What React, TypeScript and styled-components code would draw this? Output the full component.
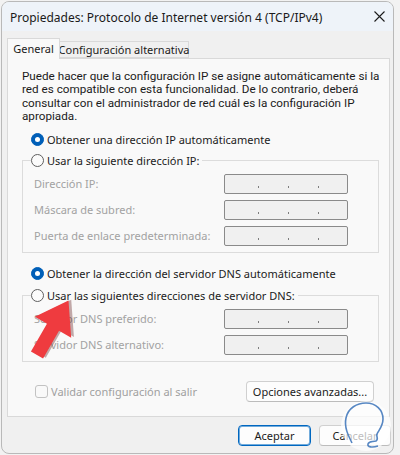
import React from "react";
import styled, { createGlobalStyle } from "styled-components";

const Global = createGlobalStyle`
  html, body { margin: 0; padding: 0; background: #f2f2f2; }
  body {
    font-family: "Noto Sans", "Segoe UI", sans-serif;
    font-size: 11px;
    color: #1b1b1b;
    overflow: hidden;
  }
  * { box-sizing: border-box; }
`;

const Page = styled.div`
  position: relative;
  width: 400px;
  height: 455px;
  padding: 1px 0 0 1px;
`;

const Window = styled.div`
  width: 393px;
  height: 453px;
  background: #f0f0f0;
  border: 1px solid #b9b9b9;
  border-radius: 8px;
  overflow: hidden;
  display: flex;
  flex-direction: column;
`;

const TitleBar = styled.div`
  height: 29px;
  flex: none;
  background: #eef3f9;
  display: flex;
  align-items: center;
  justify-content: space-between;
  padding-left: 8px;
`;

const Title = styled.span`
  font-size: 12px;
  color: #1a1a1a;
  white-space: nowrap;
  padding-top: 1px;
`;

const CloseBtn = styled.div`
  width: 22px;
  height: 29px;
  display: flex;
  align-items: center;
  justify-content: center;
  margin-right: 3px;
`;

const Body = styled.div`
  flex: 1;
  display: flex;
  flex-direction: column;
  padding: 7px 2px 0 5px;
`;

const TabRow = styled.div`
  display: flex;
  align-items: flex-end;
  height: 20px;
  position: relative;
  z-index: 2;
`;

const Tab = styled.div<{ $active?: boolean }>`
  display: flex;
  align-items: center;
  justify-content: center;
  white-space: nowrap;
  border: 1px solid #d9d9d9;
  border-bottom: ${(p) => (p.$active ? "none" : "1px solid #d9d9d9")};
  background: ${(p) => (p.$active ? "#f9f9f9" : "#f0f0f0")};
  height: ${(p) => (p.$active ? "21px" : "17px")};
  margin-bottom: ${(p) => (p.$active ? "-1px" : "0")};
  margin-left: ${(p) => (p.$active ? "0" : "-1px")};
  padding: ${(p) => (p.$active ? "0 0 1px" : "0")};
  width: ${(p) => (p.$active ? "53px" : "130px")};
  position: relative;
  z-index: ${(p) => (p.$active ? 2 : 1)};
`;

const Panel = styled.div`
  height: 359px;
  width: 383px;
  background: #f9f9f9;
  border: 1px solid #d9d9d9;
  display: flex;
  flex-direction: column;
  padding: 0 0 0 14px;
`;

const Para = styled.p`
  margin: 11px 0 0;
  font-family: Roboto, "Noto Sans", sans-serif;
  font-size: 11.7px;
  line-height: 13.4px;
  white-space: nowrap;
`;

const RadioRow = styled.label<{ $mt: number }>`
  display: flex;
  align-items: center;
  gap: 3px;
  height: 16px;
  margin-top: ${(p) => p.$mt}px;
  padding-left: 9px;
  white-space: nowrap;
`;

const RadioDot = styled.span<{ $on?: boolean }>`
  width: 13px;
  height: 13px;
  flex: none;
  border-radius: 50%;
  background: ${(p) => (p.$on ? "#005fb8" : "#fbfbfb")};
  border: 1px solid ${(p) => (p.$on ? "#005fb8" : "#5f5f5f")};
  display: flex;
  align-items: center;
  justify-content: center;
  &::after {
    content: "";
    display: ${(p) => (p.$on ? "block" : "none")};
    width: 5px;
    height: 5px;
    border-radius: 50%;
    background: #ffffff;
  }
`;

const Group = styled.fieldset<{ $mt: number }>`
  margin: ${(p) => p.$mt}px 0 0;
  width: 357px;
  padding: 0 0 6px 11px;
  border: 1px solid #dcdcdc;
  min-width: 0;
  display: flex;
  flex-direction: column;
  gap: 6px;
`;

const Legend = styled.legend`
  padding: 0 3px 0 0;
  margin-left: -3px;
  height: 16px;
  display: flex;
  align-items: center;
  gap: 3px;
  white-space: nowrap;
`;

const FieldRow = styled.div<{ $first?: boolean }>`
  display: grid;
  grid-template-columns: 190px 124px;
  align-items: center;
  margin-top: ${(p) => (p.$first ? "5px" : "0")};
  color: #a2a2a2;
  white-space: nowrap;
`;

const IpBox = styled.div`
  height: 20px;
  border: 1px solid #8a8a8a;
  border-radius: 2px;
  background: #f0f0f0;
  display: flex;
  align-items: flex-end;
  justify-content: center;
  gap: 29px;
  padding: 0 0 5px 4px;
`;

const IpDot = styled.span`
  width: 1px;
  height: 2px;
  background: #7d7d7d;
`;

const BottomRow = styled.div`
  display: flex;
  align-items: center;
  justify-content: space-between;
  margin-top: 19px;
  padding: 0 15px 0 13px;
  height: 21px;
`;

const CheckRow = styled.label`
  display: flex;
  align-items: center;
  gap: 3px;
  color: #a0a0a0;
  white-space: nowrap;
`;

const CheckBox = styled.span`
  width: 13px;
  height: 13px;
  border: 1px solid #c2c2c2;
  border-radius: 3px;
  background: #f9f9f9;
`;

const Button = styled.button<{ $primary?: boolean; $w: number }>`
  font-family: inherit;
  font-size: 11px;
  color: #1b1b1b;
  height: 21px;
  width: ${(p) => p.$w}px;
  padding: 0;
  background: #fdfdfd;
  border-radius: 4px;
  border: 1px solid ${(p) => (p.$primary ? "#0067c0" : "#d0d0d0")};
  border-bottom-color: ${(p) => (p.$primary ? "#0067c0" : "#bcbcbc")};
  box-shadow: ${(p) => (p.$primary ? "inset 0 0 0 1px rgba(0,103,192,0.55)" : "none")};
  white-space: nowrap;
`;

const Footer = styled.div`
  display: flex;
  justify-content: flex-end;
  gap: 8px;
  margin-top: 8px;
  padding-right: 0;
`;

const Overlay = styled.svg`
  position: absolute;
  left: 0;
  top: 0;
  pointer-events: none;
`;

const Ip = () => (
  <IpBox>
    <IpDot />
    <IpDot />
    <IpDot />
  </IpBox>
);

export default function App() {
  return (
    <>
      <Global />
      <Page>
        <Window>
          <TitleBar>
            <Title>Propiedades: Protocolo de Internet versión 4 (TCP/IPv4)</Title>
            <CloseBtn>
              <svg width="11" height="11" viewBox="0 0 11 11">
                <path d="M0.5 0.5 L10.5 10.5 M10.5 0.5 L0.5 10.5" stroke="#1c1c1c" strokeWidth="1.1" />
              </svg>
            </CloseBtn>
          </TitleBar>
          <Body>
            <TabRow>
              <Tab $active>General</Tab>
              <Tab>Configuración alternativa</Tab>
            </TabRow>
            <Panel>
              <Para>
                Puede hacer que la configuración IP se asigne automáticamente si la
                <br />
                red es compatible con esta funcionalidad. De lo contrario, deberá
                <br />
                consultar con el administrador de red cuál es la configuración IP
                <br />
                apropiada.
              </Para>
              <RadioRow $mt={8}>
                <RadioDot $on />
                Obtener una dirección IP automáticamente
              </RadioRow>
              <Group $mt={5}>
                <Legend>
                  <RadioDot />
                  Usar la siguiente dirección IP:
                </Legend>
                <FieldRow $first>
                  <span>Dirección IP:</span>
                  <Ip />
                </FieldRow>
                <FieldRow>
                  <span>Máscara de subred:</span>
                  <Ip />
                </FieldRow>
                <FieldRow>
                  <span>Puerta de enlace predeterminada:</span>
                  <Ip />
                </FieldRow>
              </Group>
              <RadioRow $mt={13}>
                <RadioDot $on />
                Obtener la dirección del servidor DNS automáticamente
              </RadioRow>
              <Group $mt={6}>
                <Legend>
                  <RadioDot />
                  Usar las siguientes direcciones de servidor DNS:
                </Legend>
                <FieldRow $first>
                  <span>Servidor DNS preferido:</span>
                  <Ip />
                </FieldRow>
                <FieldRow>
                  <span>Servidor DNS alternativo:</span>
                  <Ip />
                </FieldRow>
              </Group>
              <BottomRow>
                <CheckRow>
                  <CheckBox />
                  Validar configuración al salir
                </CheckRow>
                <Button $w={128}>Opciones avanzadas...</Button>
              </BottomRow>
            </Panel>
            <Footer>
              <Button $primary $w={73}>Aceptar</Button>
              <Button $w={72}>Cancelar</Button>
            </Footer>
          </Body>
        </Window>
        <Overlay width="400" height="455" viewBox="0 0 400 455">
          <g transform="translate(37 355) rotate(-60)">
            <polygon
              points="0,-7 32,-7 32,-21 63,0 32,21 32,7 0,7"
              fill="#5a1010"
              opacity="0.35"
              transform="translate(2 2)"
            />
            <polygon points="0,-7 32,-7 32,-21 63,0 32,21 32,7 0,7" fill="#ef3b3f" />
          </g>
          <circle cx="366" cy="426" r="25" fill="#ffffff" opacity="0.7" />
          <path
            d="M352 443 C348 435 344 427 346 418 C348 408 357 403 366 403 C376 403 383 410 383 419 C383 426 379 430 377 434 C376 437 379 439 376 441 C372 442 369 441 368 444 C367 447 372 448 378 446"
            fill="none"
            stroke="#3a72b8"
            strokeWidth="1.6"
            opacity="0.85"
          />
        </Overlay>
      </Page>
    </>
  );
}
